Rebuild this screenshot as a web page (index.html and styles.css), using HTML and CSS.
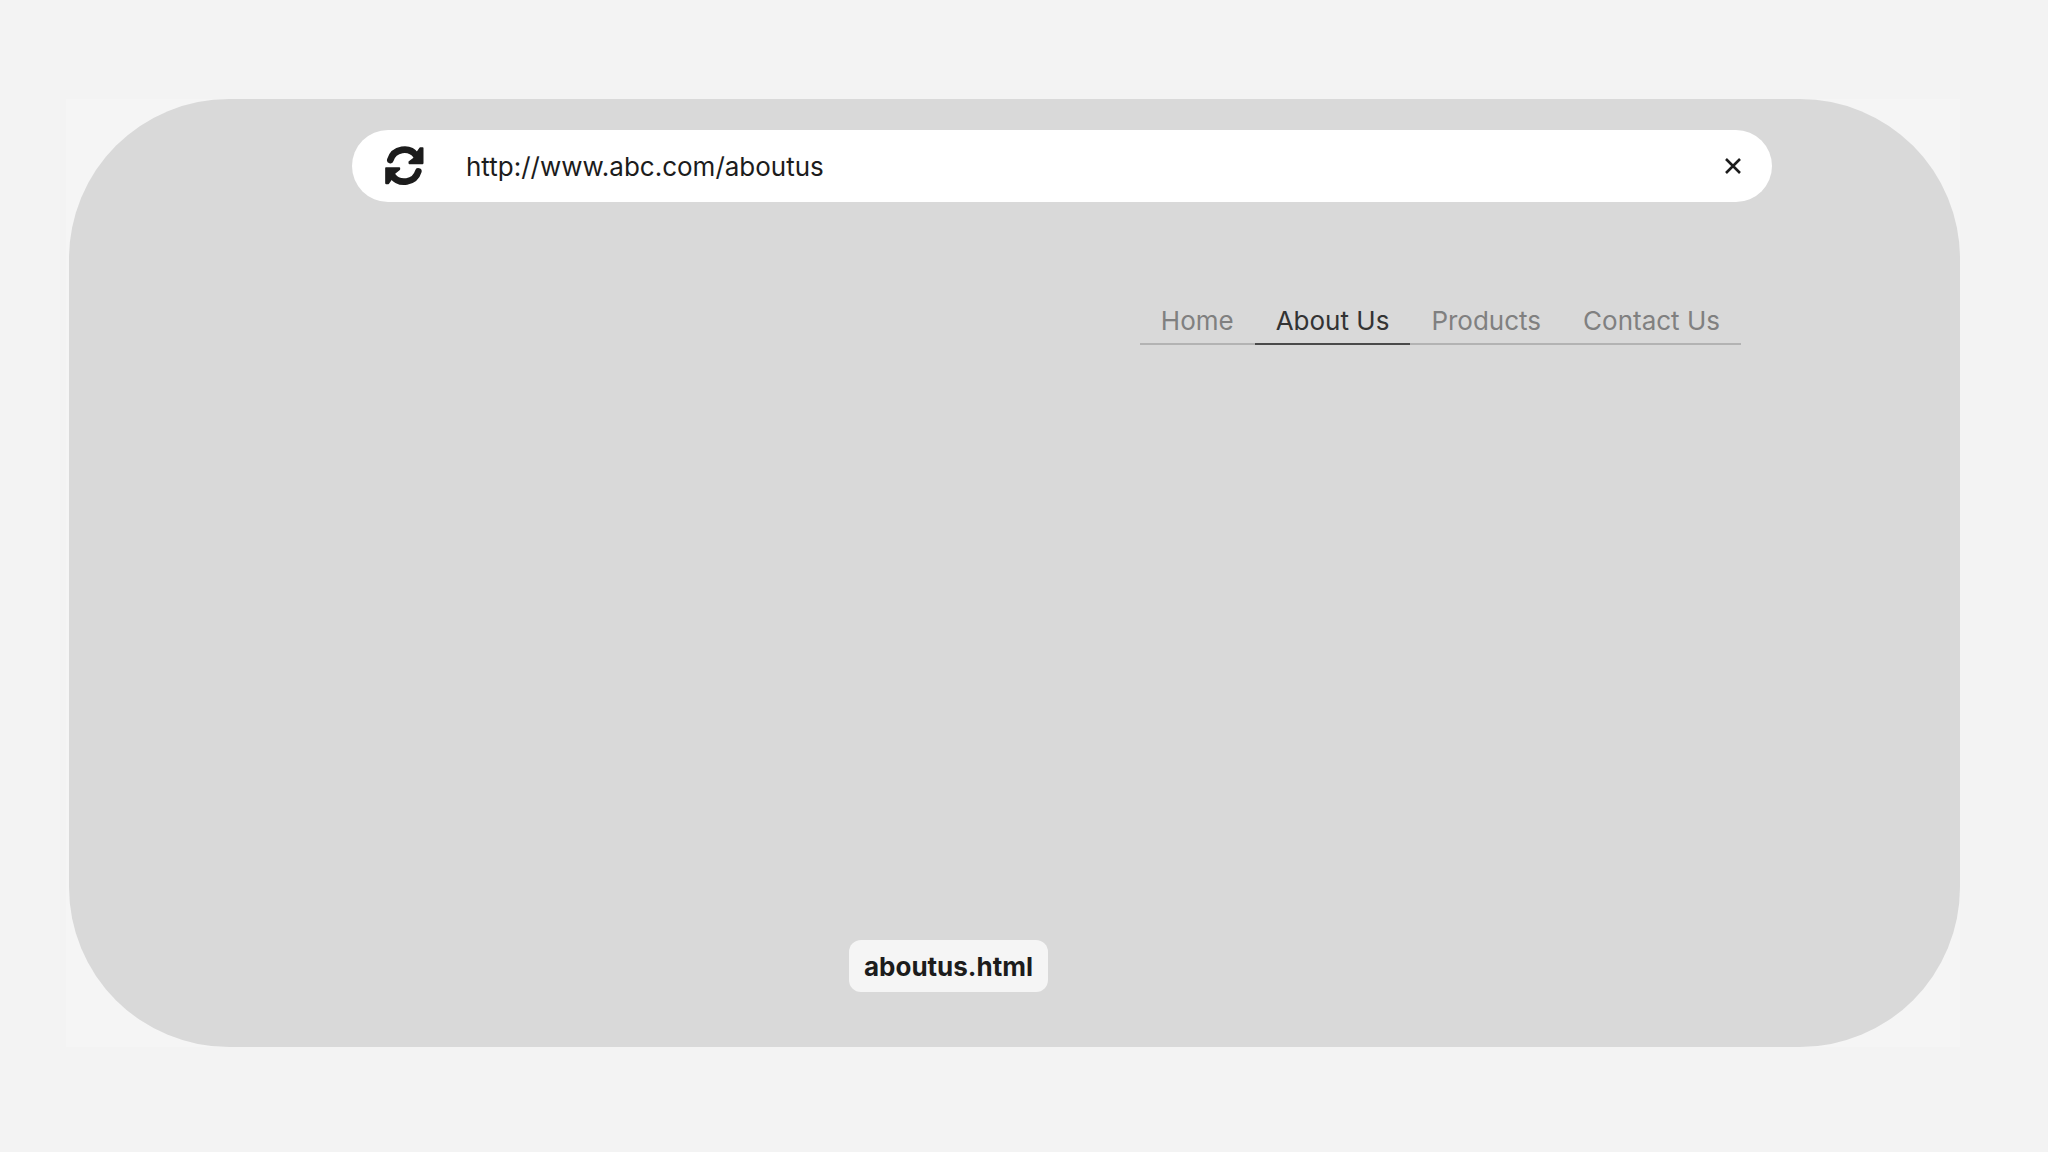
FILE: index.html
```
<!DOCTYPE html>
<html lang="en">
<head>
<meta charset="UTF-8">
<meta name="viewport" content="width=device-width, initial-scale=1.0">
<title>About Us</title>
<link rel="stylesheet" href="styles.css">
</head>
<body>
    <div class="wrapper">
        <div class="frame">
            <div class="browser">
                <!-- address bar -->
                <form class="address-bar">
                    <button class="reload" type="button" aria-label="Reload">
                        <svg viewBox="0 0 126 126" width="42" height="42">
                            <path d="M19 45A44 43 0 0 1 97 32" fill="none" stroke="#1c1c1c" stroke-width="20" stroke-linecap="round"/>
                            <path d="M100 22L109 9H116V55H76V51L90 40Z" fill="#1c1c1c" stroke="#1c1c1c" stroke-width="5" stroke-linejoin="round"/>
                            <path d="M103 79A44 43 0 0 1 25 92" fill="none" stroke="#1c1c1c" stroke-width="20" stroke-linecap="round"/>
                            <path d="M22 102L13 115H6V69H46V73L32 84Z" fill="#1c1c1c" stroke="#1c1c1c" stroke-width="5" stroke-linejoin="round"/>
                        </svg>
                    </button>
                    <input class="url" type="text" aria-label="Address" value="http://www.abc.com/aboutus">
                    <button class="clear" type="button" aria-label="Clear">
                        <svg viewBox="0 0 16 16" width="16" height="16">
                            <path d="M1 1L15 15M15 1L1 15" stroke="#1c1c1c" stroke-width="2.6"/>
                        </svg>
                    </button>
                </form>

                <!-- menu -->
                <nav class="menu">
                    <a href="#home">Home</a>
                    <a class="active" href="#aboutus">About Us</a>
                    <a href="#products">Products</a>
                    <a href="#contactus">Contact Us</a>
                </nav>

                <div class="caption">
                    <span class="file-name">aboutus.html</span>
                </div>
            </div>
        </div>
    </div>
</body>
</html>
```
FILE: styles.css
```
*{
    box-sizing: border-box;
}
body{
    margin: 0;
    background: #f3f3f3;
    color: #1c1c1c;
    font-family: Inter, "Liberation Sans", sans-serif;
    font-size: 26px;
    line-height: 32px;
}
.wrapper{
    display: flex;
    min-height: 100vh;
    padding: 99px 88px 105px 66px;
}
/* lighter square behind the rounded window */
.frame{
    display: flex;
    flex: 1;
    padding-left: 3px;
    background: #f5f5f5;
}
.browser{
    display: flex;
    flex: 1;
    flex-direction: column;
    padding: 31px 0 55px;
    background: #d9d9d9;
    border-radius: 160px;
}

/* address bar */
.address-bar{
    display: flex;
    align-items: center;
    height: 72px;
    margin: 0 188px 0 283px;
    padding: 0 31px 0 32px;
    background: #fff;
    border-radius: 36px;
}
.address-bar button{
    display: flex;
    padding: 0;
    border: 0;
    background: none;
    cursor: pointer;
}
.url{
    flex: 1;
    min-width: 0;
    margin: 0 24px 0 40px;
    padding: 2px 0 0;
    border: 0;
    outline: 0;
    background: none;
    color: #1c1c1c;
    font: inherit;
}

/* menu */
.menu{
    display: flex;
    align-self: flex-end;
    margin: 103px 219px 0 0;
    box-shadow: inset 0 -2px #b3b3b3;
}
.menu a{
    padding: 0 21px 6px;
    border-bottom: 2px solid transparent;
    color: #808080;
    text-decoration: none;
}
.menu .active{
    border-color: #4a4a4a;
    color: #333;
}

.caption{
    margin-top: auto;
    padding-right: 132px;
    text-align: center;
}
.file-name{
    display: inline-block;
    padding: 11px 15px 9px;
    background: #f5f5f5;
    border-radius: 12px;
    font-weight: 700;
}
```
